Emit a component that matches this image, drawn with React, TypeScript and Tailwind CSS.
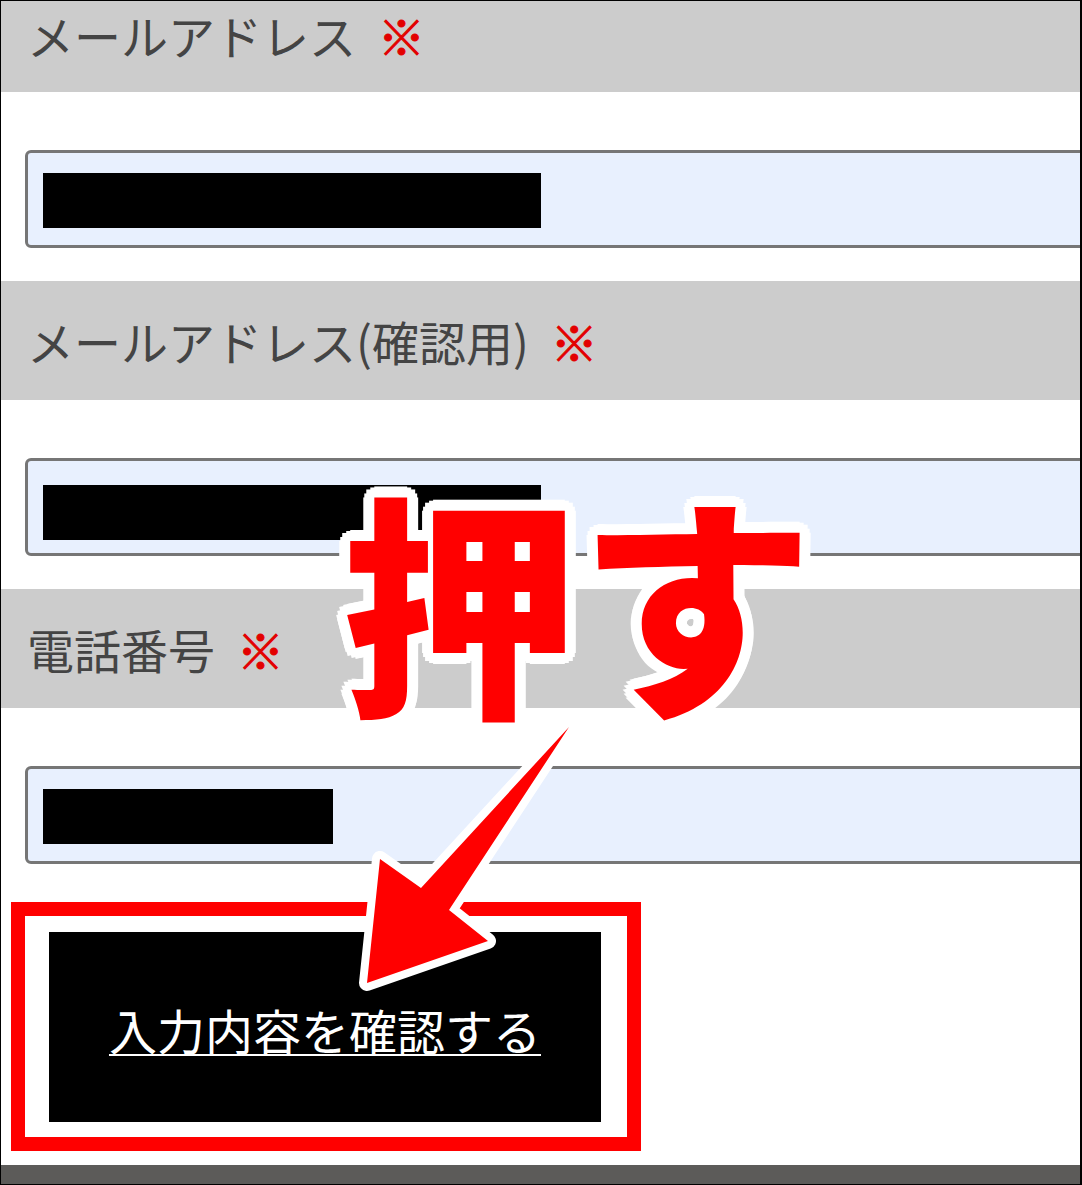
import React from "react";

const labelFont = "font-['Noto_Sans_CJK_JP','Noto_Sans',sans-serif]";

function Mark() {
  return (
    <span className={`${labelFont} text-[47px] leading-none text-[#e30000] ml-[22px] [-webkit-text-stroke:1px_#e30000]`}>※</span>
  );
}

function Header({ label, className = "" }: { label: string; className?: string }) {
  return (
    <div className={`h-[119px] shrink-0 bg-[#cccccc] flex items-center pl-[26px] ${className}`}>
      <span className={`${labelFont} text-[47px] leading-none text-[#444444] whitespace-nowrap`}>{label}</span>
      <Mark />
    </div>
  );
}

function Field({ barW, pt, className = "" }: { barW: string; pt: string; className?: string }) {
  return (
    <div
      className={`ml-[24px] w-[1100px] h-[98px] shrink-0 box-border border-[3px] border-[#767676] rounded-[6px] bg-[#e8f0fe] pl-[15px] ${pt} ${className}`}
    >
      <div className={`${barW} h-[55px] bg-black`} />
    </div>
  );
}

export default function App() {
  return (
    <div className="relative w-[1082px] h-[1185px] overflow-hidden bg-white box-border border border-black border-r-2 flex flex-col">
      <div className="h-[91px] shrink-0 bg-[#cccccc] flex items-start pt-[10px] pl-[26px]">
        <span className={`${labelFont} text-[47px] leading-none text-[#444444] whitespace-nowrap`}>メールアドレス</span>
        <Mark />
      </div>
      <Field barW="w-[498px]" pt="pt-[20px]" className="mt-[58px]" />
      <Header label="メールアドレス(確認用)" className="mt-[33px]" />
      <Field barW="w-[498px]" pt="pt-[24px]" className="mt-[58px]" />
      <Header label="電話番号" className="mt-[33px]" />
      <Field barW="w-[290px]" pt="pt-[20px]" className="mt-[58px]" />

      <div className="mt-[38px] ml-[10px] w-[630px] h-[249px] shrink-0 box-border border-[14px] border-[#ff0000] pt-[16px] pl-[24px]">
        <div className="w-[552px] h-[190px] bg-black flex items-center justify-center pt-[4px]">
          <span
            className={`${labelFont} text-[48px] leading-none text-white underline decoration-2 underline-offset-[4px] whitespace-nowrap`}
          >
            入力内容を確認する
          </span>
        </div>
      </div>

      <div className="mt-[14px] h-[20px] shrink-0 bg-[#5c5b59]" />

      {/* annotation text */}
      <div
        className={`absolute left-[341px] top-[478px] ${labelFont} font-black text-[236px] leading-none text-[#ff0000] whitespace-nowrap [text-shadow:11px_0_0_#fff,10px_4px_0_#fff,8px_8px_0_#fff,4px_10px_0_#fff,0_11px_0_#fff,-4px_10px_0_#fff,-8px_8px_0_#fff,-10px_4px_0_#fff,-11px_0_0_#fff,-10px_-4px_0_#fff,-8px_-8px_0_#fff,-4px_-10px_0_#fff,0_-11px_0_#fff,4px_-10px_0_#fff,8px_-8px_0_#fff,10px_-4px_0_#fff,6px_0_0_#fff,-6px_0_0_#fff,0_6px_0_#fff,0_-6px_0_#fff,4px_4px_0_#fff,-4px_4px_0_#fff,4px_-4px_0_#fff,-4px_-4px_0_#fff]`}
      >
        押す
      </div>

      {/* annotation arrow */}
      <svg
        className="absolute left-0 top-0 w-[1082px] h-[1185px] pointer-events-none"
        viewBox="0 0 1082 1185"
      >
        <polygon
          points="568,726 420,887 379,858 366,982 487,940 448,909"
          fill="#ff0000"
          stroke="#ffffff"
          strokeWidth={16}
          strokeLinejoin="round"
          paintOrder="stroke"
        />
      </svg>
    </div>
  );
}
